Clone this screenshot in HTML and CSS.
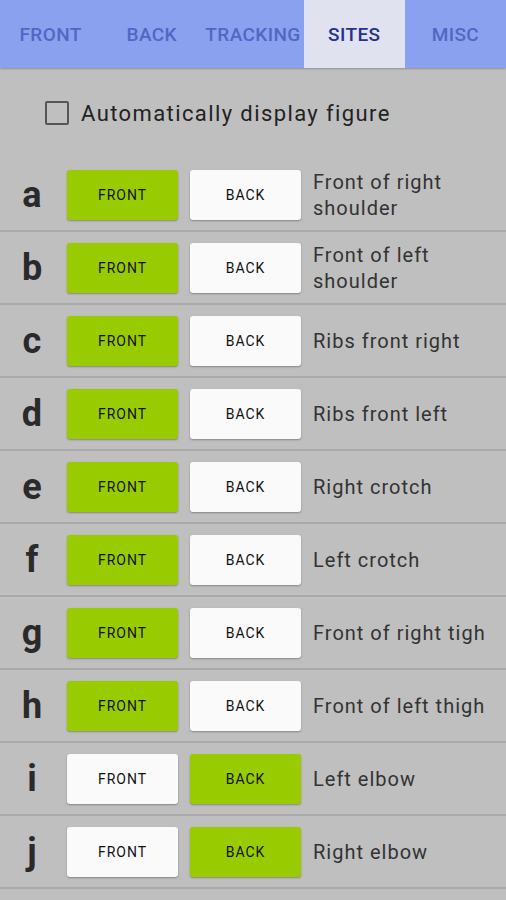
FILE: index.html
```html
<!DOCTYPE html>
<html>
<head>
<meta charset="utf-8">
<link rel="stylesheet" href="styles.css">
</head>
<body>
<div class="tabs">
  <div class="tab">FRONT</div>
  <div class="tab">BACK</div>
  <div class="tab">TRACKING</div>
  <div class="tab active">SITES</div>
  <div class="tab">MISC</div>
</div>
<div class="auto">
  <span class="box"></span>
  <span class="auto-label">Automatically display figure</span>
</div>
<div class="list">
  <div class="row"><div class="letter">a</div><div class="btn on">FRONT</div><div class="btn">BACK</div><div class="label">Front of right shoulder</div></div>
  <div class="row"><div class="letter">b</div><div class="btn on">FRONT</div><div class="btn">BACK</div><div class="label">Front of left shoulder</div></div>
  <div class="row"><div class="letter">c</div><div class="btn on">FRONT</div><div class="btn">BACK</div><div class="label">Ribs front right</div></div>
  <div class="row"><div class="letter">d</div><div class="btn on">FRONT</div><div class="btn">BACK</div><div class="label">Ribs front left</div></div>
  <div class="row"><div class="letter">e</div><div class="btn on">FRONT</div><div class="btn">BACK</div><div class="label">Right crotch</div></div>
  <div class="row"><div class="letter">f</div><div class="btn on">FRONT</div><div class="btn">BACK</div><div class="label">Left crotch</div></div>
  <div class="row"><div class="letter">g</div><div class="btn on">FRONT</div><div class="btn">BACK</div><div class="label nowrap">Front of right tigh</div></div>
  <div class="row"><div class="letter">h</div><div class="btn on">FRONT</div><div class="btn">BACK</div><div class="label nowrap">Front of left thigh</div></div>
  <div class="row"><div class="letter">i</div><div class="btn">FRONT</div><div class="btn on">BACK</div><div class="label">Left elbow</div></div>
  <div class="row"><div class="letter">j</div><div class="btn">FRONT</div><div class="btn on">BACK</div><div class="label">Right elbow</div></div>
</div>
</body>
</html>
```
FILE: styles.css
```css
html, body {
  margin: 0;
  padding: 0;
}
body {
  width: 506px;
  height: 900px;
  overflow: hidden;
  background: #bfbfbf;
  font-family: Roboto, "Liberation Sans", sans-serif;
}
.tabs {
  display: flex;
  height: 68px;
  background: #8aa1ef;
  box-shadow: 0 1px 2px rgba(0,0,0,0.25);
  position: relative;
}
.tab {
  flex: 1;
  display: flex;
  align-items: center;
  justify-content: center;
  font-size: 19px;
  font-weight: 500;
  letter-spacing: 0.4px;
  color: #5266c4;
}
.tab.active {
  background: #e1e2f0;
  color: #25318f;
}
.auto {
  height: 91px;
  display: flex;
  align-items: center;
  padding-left: 45px;
  box-sizing: border-box;
  padding-bottom: 2px;
}
.box {
  width: 20px;
  height: 20px;
  border: 2px solid #555;
  border-radius: 2px;
  margin-right: 12px;
}
.auto-label {
  font-size: 22px;
  letter-spacing: 1.4px;
  color: #222;
  padding-top: 2px;
}
.row {
  height: 71px;
  display: flex;
  align-items: center;
  border-bottom: 2px solid #a9a9a9;
}
.letter {
  width: 67px;
  text-align: center;
  font-size: 36px;
  font-weight: 700;
  color: #2a2a2a;
  flex-shrink: 0;
  padding-right: 3px;
  box-sizing: border-box;
}
.btn {
  width: 111px;
  height: 50px;
  flex-shrink: 0;
  margin-right: 12px;
  background: #fafafa;
  border-radius: 3px;
  box-shadow: 0 1px 2px rgba(0,0,0,0.3);
  display: flex;
  align-items: center;
  justify-content: center;
  font-size: 14px;
  font-weight: 400;
  letter-spacing: 1px;
  color: #111;
}
.btn.on {
  background: #99cc00;
}
.label {
  font-size: 20px;
  line-height: 26px;
  letter-spacing: 1px;
  color: #333;
  padding-right: 4px;
}
.nowrap {
  white-space: nowrap;
}
```
